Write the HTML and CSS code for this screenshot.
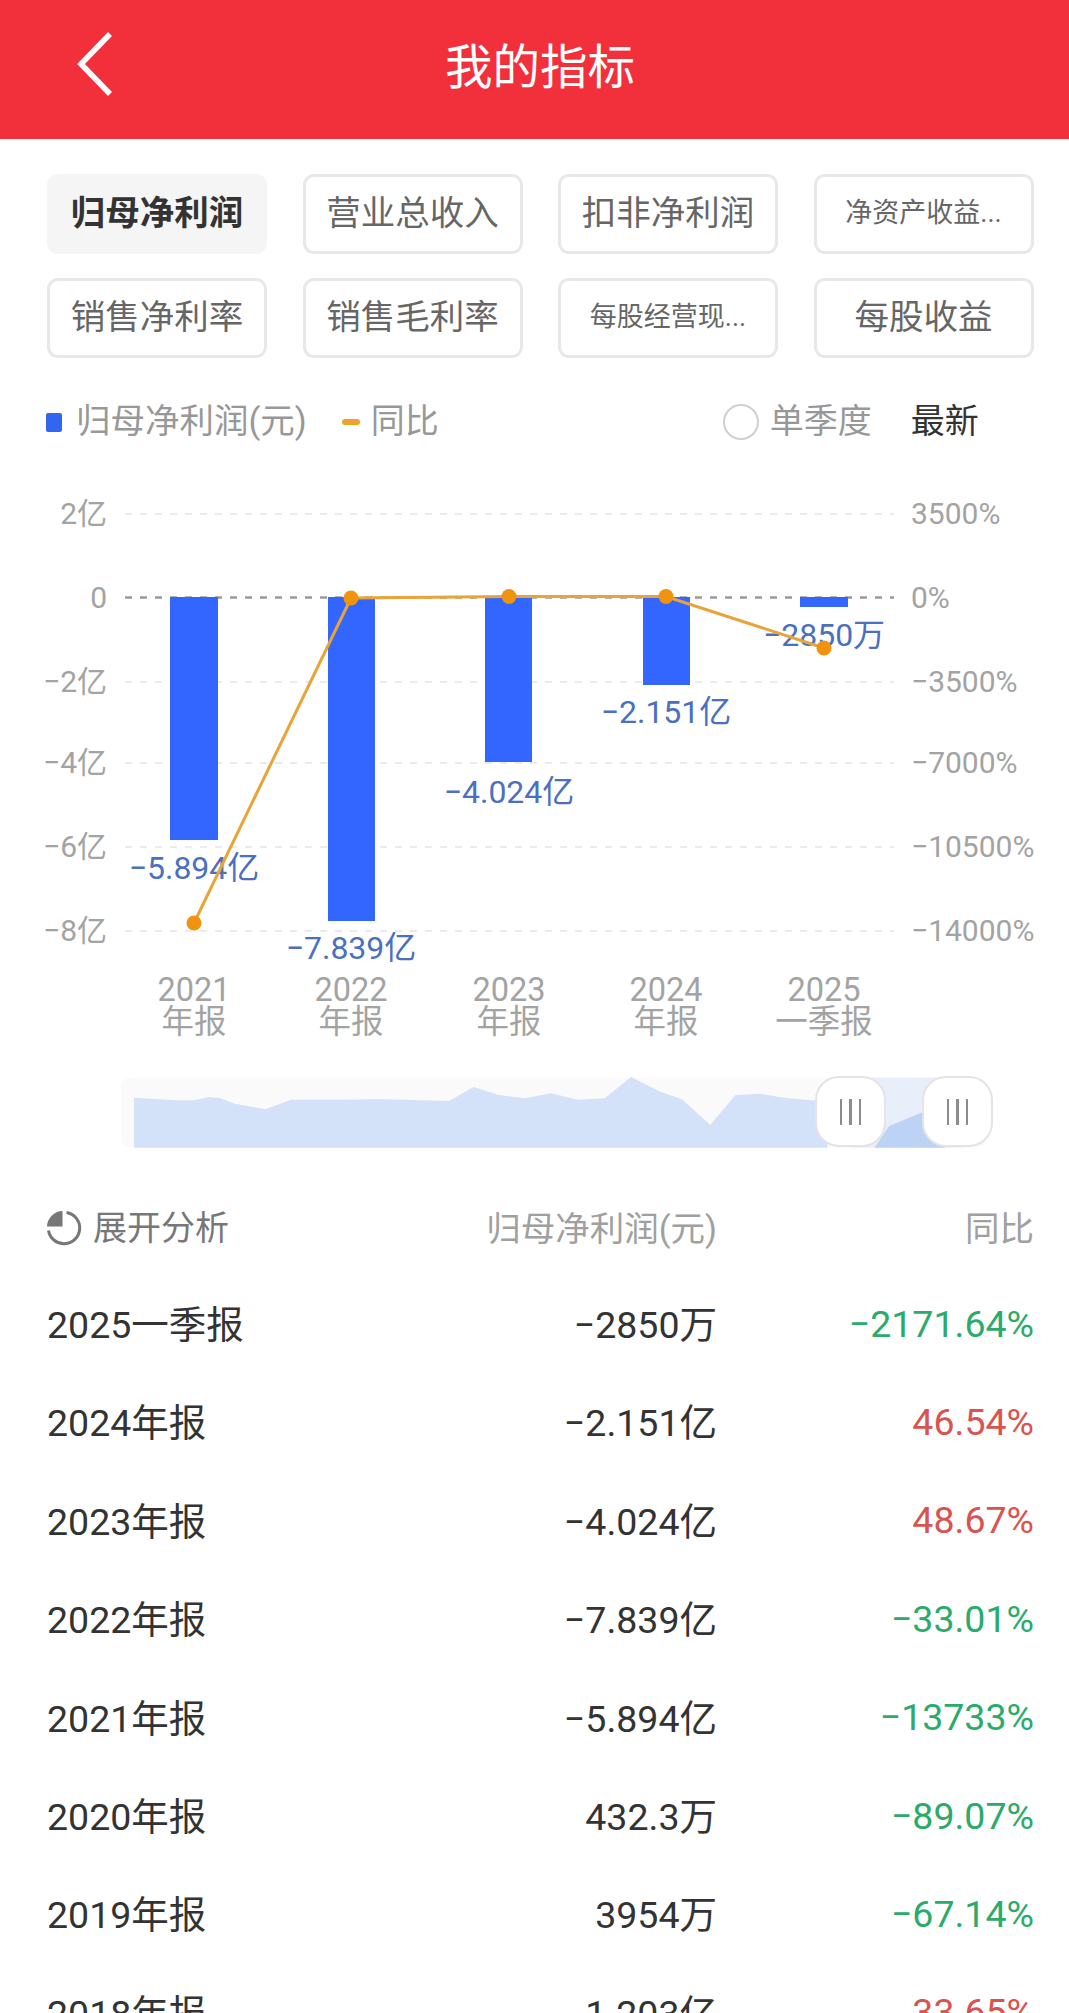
FILE: index.html
```html
<!DOCTYPE html>
<html lang="zh-CN">
<head>
<meta charset="utf-8">
<title>我的指标</title>
<link rel="stylesheet" href="styles.css">
</head>
<body>
<div class="page">
  <header class="topbar">
    <svg class="back" viewBox="0 0 40 66" width="40" height="66"><path d="M36 3 L7 33 L36 63" /></svg>
    <h1 class="title">我的指标</h1>
  </header>

  <section class="chips">
    <div class="chip active">归母净利润</div>
    <div class="chip">营业总收入</div>
    <div class="chip">扣非净利润</div>
    <div class="chip small">净资产收益...</div>
    <div class="chip">销售净利率</div>
    <div class="chip">销售毛利率</div>
    <div class="chip small">每股经营现...</div>
    <div class="chip">每股收益</div>
  </section>

  <section class="legend">
    <span class="swatch-bar"></span>
    <span class="legend-text first">归母净利润(元)</span>
    <span class="swatch-line"></span>
    <span class="legend-text near">同比</span>
    <span class="radio"></span>
    <span class="legend-text near">单季度</span>
    <span class="latest">最新</span>
  </section>

  <svg class="chart" viewBox="0 445 1069 615" width="1069" height="615">
    <g class="grid">
      <line x1="125" x2="894" y1="513" y2="513"/>
      <line x1="125" x2="894" y1="681" y2="681"/>
      <line x1="125" x2="894" y1="762" y2="762"/>
      <line x1="125" x2="894" y1="846" y2="846"/>
      <line x1="125" x2="894" y1="930" y2="930"/>
    </g>
    <line class="zero" x1="125" x2="894" y1="596.5" y2="596.5"/>
    <g class="ylabels left">
      <text x="107" y="512">2亿</text>
      <text x="107" y="596">0</text>
      <text x="107" y="680">−2亿</text>
      <text x="107" y="761">−4亿</text>
      <text x="107" y="845">−6亿</text>
      <text x="107" y="929">−8亿</text>
    </g>
    <g class="ylabels right">
      <text x="911" y="512">3500%</text>
      <text x="911" y="596">0%</text>
      <text x="911" y="680">−3500%</text>
      <text x="911" y="761">−7000%</text>
      <text x="911" y="845">−10500%</text>
      <text x="911" y="929">−14000%</text>
    </g>
    <g class="bars">
      <rect x="170" y="596" width="48" height="243"/>
      <rect x="328" y="596" width="47" height="324"/>
      <rect x="485" y="596" width="47" height="165"/>
      <rect x="643" y="596" width="47" height="88"/>
      <rect x="800" y="596" width="48" height="10"/>
    </g>
    <g class="values">
      <text x="194" y="867">−5.894亿</text>
      <text x="351" y="947">−7.839亿</text>
      <text x="509" y="791">−4.024亿</text>
      <text x="666" y="711">−2.151亿</text>
      <text x="824" y="634">−2850万</text>
    </g>
    <polyline class="trend" points="194,922 351,597 509,595.5 666,595.5 824,647"/>
    <g class="dots">
      <circle cx="194" cy="922" r="7.5"/>
      <circle cx="351" cy="597" r="7.5"/>
      <circle cx="509" cy="595.5" r="7.5"/>
      <circle cx="666" cy="595.5" r="7.5"/>
      <circle cx="824" cy="647" r="7.5"/>
    </g>
    <g class="xlabels">
      <text x="194" y="989">2021</text><text x="194" y="1021">年报</text>
      <text x="351" y="989">2022</text><text x="351" y="1021">年报</text>
      <text x="509" y="989">2023</text><text x="509" y="1021">年报</text>
      <text x="666" y="989">2024</text><text x="666" y="1021">年报</text>
      <text x="824" y="989">2025</text><text x="824" y="1021">一季报</text>
    </g>
  </svg>

  <div class="navigator">
    <svg class="nav-svg" viewBox="0 0 1568 351" width="920" height="117" preserveAspectRatio="none">
      <rect class="nav-bg" x="36" y="50" width="1474" height="210" rx="20"/>
      <rect class="nav-window" x="1280" y="50" width="190" height="210"/>
      <path class="nav-area" d="M58 110 L130 118 L160 118 L185 108 L205 112 L230 128 L282 145 L325 116 L420 116 L470 114 L595 120 L637 78 L680 102 L725 112 L768 97 L815 116 L860 112 L905 48 L955 92 L992 115 L1040 192 L1083 102 L1125 98 L1165 110 L1240 122 L1240 260 L58 260 Z"/>
      <path class="nav-area-sel" d="M1320 260 L1345 195 L1400 155 L1440 140 L1440 260 Z"/>
    </svg>
    <div class="handle one"><i></i><i></i><i></i></div>
    <div class="handle two"><i></i><i></i><i></i></div>
  </div>

  <section class="table">
    <div class="thead analyse">
      <svg class="pie" viewBox="0 0 36 36" width="36" height="36">
        <path class="pie-ring" d="M20.5 2.5 A15.7 15.7 0 1 1 2.5 20.5"/>
        <path class="pie-fill" d="M16.5 1 A16 16 0 0 0 1 16.5 L16.5 16.5 Z"/>
      </svg>
      <span>展开分析</span>
    </div>
    <div class="thead num">归母净利润(元)</div>
    <div class="thead num">同比</div>

    <div class="cell">2025一季报</div><div class="cell num">−2850万</div><div class="cell rate down">−2171.64%</div>
    <div class="cell">2024年报</div><div class="cell num">−2.151亿</div><div class="cell rate up">46.54%</div>
    <div class="cell">2023年报</div><div class="cell num">−4.024亿</div><div class="cell rate up">48.67%</div>
    <div class="cell">2022年报</div><div class="cell num">−7.839亿</div><div class="cell rate down">−33.01%</div>
    <div class="cell">2021年报</div><div class="cell num">−5.894亿</div><div class="cell rate down">−13733%</div>
    <div class="cell">2020年报</div><div class="cell num">432.3万</div><div class="cell rate down">−89.07%</div>
    <div class="cell">2019年报</div><div class="cell num">3954万</div><div class="cell rate down">−67.14%</div>
    <div class="cell">2018年报</div><div class="cell num">1.203亿</div><div class="cell rate up">33.65%</div>
  </section>
</div>
</body>
</html>
```
FILE: styles.css
```css
* { box-sizing: border-box; }
html, body { margin: 0; padding: 0; background: #fff; }
body { font-family: Roboto, "Noto Sans CJK SC", sans-serif; }
.page { width: 1069px; height: 2013px; overflow: hidden; }

.topbar {
  height: 139px;
  background: #f2303c;
  display: flex;
  align-items: center;
  justify-content: center;
  position: relative;
  padding: 0 0 2px 11px;
}
.back { position: absolute; left: 74px; top: 31px; }
.back path { fill: none; stroke: #fff; stroke-width: 5.5; }
.title { margin: 0; color: #fff; font-size: 47.5px; font-weight: 400; line-height: 1; }

.chips {
  display: grid;
  grid-template-columns: repeat(4, 220px);
  grid-auto-rows: 80px;
  gap: 24px 35.5px;
  padding: 35px 0 0 47px;
}
.chip {
  display: flex;
  align-items: center;
  justify-content: center;
  border: 3px solid #e8e8e8;
  border-radius: 11px;
  color: #666;
  font-size: 34.5px;
  padding-bottom: 9px;
}
.chip.active { background: #f5f5f5; border-color: #f5f5f5; color: #333; font-weight: 700; }
.chip.small { font-size: 27px; padding-bottom: 8px; }

.legend {
  display: flex;
  align-items: center;
  height: 48px;
  margin-top: 40px;
  padding-left: 46px;
}
.swatch-bar { width: 16px; height: 19px; background: #3366f0; border-radius: 2px; }
.legend-text { font-size: 34px; color: #989898; margin-left: 14px; white-space: nowrap; padding-bottom: 8px; }
.legend-text.first { font-size: 34.5px; margin-right: 35px; }
.legend-text.near { margin-left: 11px; }
.swatch-line { width: 18px; height: 6px; background: #eda32a; border-radius: 3px; }
.radio {
  width: 36px;
  height: 36px;
  border: 2px solid #cfcfcf;
  border-radius: 50%;
  margin-left: 284px;
}
.latest { font-size: 34px; color: #333; margin-left: 39px; padding-bottom: 8px; }

.chart { display: block; }
.chart text { dominant-baseline: central; }
.grid line { stroke: #ebebeb; stroke-width: 2; stroke-dasharray: 7 8; }
.zero { stroke: #9a9a9a; stroke-width: 2.5; stroke-dasharray: 7 8; }
.ylabels text { font-size: 30px; fill: #a3a3a3; }
.ylabels.left text { text-anchor: end; }
.bars rect { fill: #3366ff; }
.values text { font-size: 32px; fill: #4a70bf; text-anchor: middle; }
.trend { fill: none; stroke: #e8a436; stroke-width: 3; }
.dots circle { fill: #f0930f; }
.xlabels text { font-size: 32.5px; fill: #a3a3a3; text-anchor: middle; }

.navigator { position: relative; height: 119px; margin-left: 100px; width: 920px; }
.nav-svg { display: block; }
.nav-bg { fill: #fafafa; }
.nav-window { fill: #e8eefa; }
.nav-area { fill: #d3e2f9; }
.nav-area-sel { fill: #bdd3f6; }
.handle {
  position: absolute;
  top: 15px;
  width: 71px;
  height: 71px;
  background: #fff;
  border: 2px solid #e4e4e4;
  border-radius: 24px;
  display: flex;
  align-items: center;
  justify-content: center;
  gap: 7px;
}
.handle i { width: 2.5px; height: 26px; background: #8c8c8c; }
.handle.one { left: 715px; }
.handle.two { left: 822px; }

.table {
  display: grid;
  grid-template-columns: 1fr 401px 317px;
  grid-auto-rows: 98.4px;
  padding: 0 35px 0 47px;
}
.thead {
  display: flex;
  align-items: center;
  height: 96px;
  color: #a0a0a0;
  font-size: 34.5px;
  padding-bottom: 5px;
}
.thead.num { justify-content: flex-end; }
.thead.analyse { color: #777; font-size: 34px; gap: 11px; margin-left: -1px; padding-bottom: 0; }
.thead.analyse span { padding-bottom: 5px; }
.pie { flex: none; }
.pie-ring { fill: none; stroke: #777; stroke-width: 3; }
.pie-fill { fill: #777; }
.cell { display: flex; align-items: center; font-size: 37.5px; color: #333; white-space: nowrap; margin-top: -12px; }
.cell.num { justify-content: flex-end; }
.cell.rate { justify-content: flex-end; margin-top: -8px; }
.cell.up { color: #d9534f; }
.cell.down { color: #2bab6b; }
```
